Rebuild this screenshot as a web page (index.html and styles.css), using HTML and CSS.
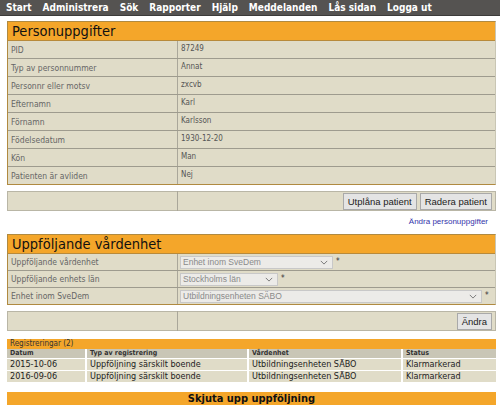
FILE: index.html
```html
<!DOCTYPE html>
<html>
<head>
<meta charset="utf-8">
<link rel="stylesheet" href="styles.css">
</head>
<body>
<nav class="nav">
  <span>Start</span><span>Administrera</span><span>Sök</span><span>Rapporter</span><span>Hjälp</span><span>Meddelanden</span><span>Lås sidan</span><span>Logga ut</span>
</nav>
<main class="page">
  <section class="box">
    <h2 class="box-title">Personuppgifter</h2>
    <table class="form">
      <tr><td class="lbl">PID</td><td class="val">87249</td></tr>
      <tr><td class="lbl">Typ av personnummer</td><td class="val">Annat</td></tr>
      <tr><td class="lbl">Personnr eller motsv</td><td class="val">zxcvb</td></tr>
      <tr><td class="lbl">Efternamn</td><td class="val">Karl</td></tr>
      <tr><td class="lbl">Förnamn</td><td class="val">Karlsson</td></tr>
      <tr><td class="lbl">Födelsedatum</td><td class="val">1930-12-20</td></tr>
      <tr><td class="lbl">Kön</td><td class="val">Man</td></tr>
      <tr><td class="lbl">Patienten är avliden</td><td class="val">Nej</td></tr>
    </table>
  </section>
  <table class="form actions">
    <tr><td class="lbl"></td><td class="val btns"><button class="btn">Utplåna patient</button><button class="btn">Radera patient</button></td></tr>
  </table>
  <div class="linkrow"><a class="link">Ändra personuppgifter</a></div>

  <section class="box second">
    <h2 class="box-title">Uppföljande vårdenhet</h2>
    <table class="form selects">
      <tr><td class="lbl">Uppföljande vårdenhet</td><td class="val"><span class="sel w1">Enhet inom SveDem<svg class="chev" viewBox="0 0 10 6"><path d="M1 1l4 4 4-4" fill="none" stroke="#777" stroke-width="1.2"/></svg></span><span class="req">*</span></td></tr>
      <tr><td class="lbl">Uppföljande enhets län</td><td class="val"><span class="sel w2">Stockholms län<svg class="chev" viewBox="0 0 10 6"><path d="M1 1l4 4 4-4" fill="none" stroke="#777" stroke-width="1.2"/></svg></span><span class="req">*</span></td></tr>
      <tr><td class="lbl">Enhet inom SveDem</td><td class="val"><span class="sel w3">Utbildningsenheten SÄBO<svg class="chev" viewBox="0 0 10 6"><path d="M1 1l4 4 4-4" fill="none" stroke="#777" stroke-width="1.2"/></svg></span><span class="req">*</span></td></tr>
    </table>
  </section>
  <table class="form actions">
    <tr><td class="lbl"></td><td class="val btns"><button class="btn">Ändra</button></td></tr>
  </table>

  <section class="reg">
    <div class="reg-title">Registreringar (2)</div>
    <table class="regtable">
      <tr><th class="c1">Datum</th><th class="c2">Typ av registrering</th><th class="c3">Vårdenhet</th><th class="c4">Status</th></tr>
      <tr><td>2015-10-06</td><td>Uppföljning särskilt boende</td><td>Utbildningsenheten SÄBO</td><td>Klarmarkerad</td></tr>
      <tr><td>2016-09-06</td><td>Uppföljning särskilt boende</td><td>Utbildningsenheten SÄBO</td><td>Klarmarkerad</td></tr>
    </table>
  </section>
  <div class="postpone">Skjuta upp uppföljning</div>
</main>
</body>
</html>
```
FILE: styles.css
```css
html, body {
  margin: 0;
  padding: 0;
  background: #fff;
}
body {
  font-family: "DejaVu Sans Condensed", "DejaVu Sans", Verdana, sans-serif;
  font-stretch: condensed;
  color: #333;
}
.nav {
  display: flex;
  height: 15px;
  background: #555351;
  border-bottom: 1px solid #3c3b3a;
  align-items: center;
  padding-left: 6px;
  gap: 11px;
}
.nav span {
  color: #fff;
  font-weight: bold;
  font-size: 10px;
}
.page {
  margin: 5px 4px 0 7px;
}
.box {
  border: 1px solid #b08a40;
  border-right: 1px solid #c9c6b4;
}
.box-title {
  margin: 0;
  background: #f4a62a;
  color: #111;
  font-weight: normal;
  font-size: 14.5px;
  height: 18px;
  line-height: 19px;
  padding-left: 4px;
  border-bottom: 1px solid #b88a3a;
}
.form {
  width: 100%;
  border-collapse: collapse;
  background: #e0dcc8;
}
.form td {
  height: 17px;
  padding: 0 0 0 3px;
  font-size: 8.5px;
  line-height: 10px;
  border-bottom: 1px solid #9e9b8e;
  vertical-align: middle;
}
.form tr:last-child td {
  border-bottom: none;
}
.lbl {
  width: 166px;
  color: #666;
  border-right: 1px solid #aaa79a;
}
.form .val {
  color: #555;
  font-size: 8px;
  vertical-align: top;
  padding-top: 3px;
  padding-left: 3px;
  height: 14px;
}
.selects td {
  height: 16px;
}
.selects .val {
  padding-top: 2px;
  height: 14px;
  padding-left: 2px;
}
.actions {
  margin-top: 6px;
  border: 1px solid #b9b6a6;
}
.actions td,
.actions .val {
  height: 18px;
  padding-top: 0;
  border-bottom: none;
  vertical-align: middle;
}
.form .btns {
  text-align: right;
  padding-right: 3px;
  line-height: 1;
}
.btn {
  font-family: "Liberation Sans", Arial, sans-serif;
  font-size: 9.5px;
  background: #e4e4e4;
  border: 1px solid #a9a9a9;
  color: #222;
  height: 17px;
  padding: 0 4px;
  margin-left: 3px;
  vertical-align: middle;
}
.linkrow {
  text-align: right;
  padding: 2px 8px 0 0;
  height: 13px;
  line-height: 12px;
}
.link {
  font-family: "Liberation Sans", Arial, sans-serif;
  font-size: 8px;
  color: #3333aa;
}
.second {
  margin-top: 8px;
}
.sel {
  display: inline-flex;
  align-items: center;
  justify-content: space-between;
  height: 11px;
  border: 1px solid #c8c8c8;
  background: #ecebe8;
  color: #8a8a8a;
  font-family: "Liberation Sans", Arial, sans-serif;
  font-size: 8.5px;
  line-height: 11px;
  padding: 0 4px 0 2px;
  vertical-align: top;
}
.w1 { width: 145px; }
.w2 { width: 90px; }
.w3 { width: 294px; }
.chev {
  width: 8px;
  height: 5px;
}
.req {
  display: inline-block;
  margin-left: 3px;
  color: #333;
  font-size: 8px;
  line-height: 11px;
  vertical-align: top;
}
.reg {
  margin-top: 8px;
}
.reg-title {
  background: #f4a62a;
  font-size: 8px;
  color: #333;
  height: 10px;
  line-height: 10px;
  padding-left: 3px;
}
.regtable {
  width: 100%;
  border-collapse: collapse;
}
.regtable th {
  background: #c9c6b6;
  font-size: 7px;
  font-weight: bold;
  text-align: left;
  color: #333;
  height: 9px;
  line-height: 9px;
  padding: 0 0 0 3px;
  border-right: 2px solid #fff;
}
.regtable td {
  background: #e0dcc8;
  font-size: 9px;
  line-height: 11px;
  color: #222;
  height: 11px;
  padding: 0 0 0 3px;
  border-right: 2px solid #fff;
  border-top: 1px solid #fff;
}
.regtable tr > :last-child { border-right: none; }
.c1 { width: 75px; }
.c2 { width: 157px; }
.c3 { width: 149px; }
.postpone {
  margin-top: 10px;
  background: #f4a62a;
  text-align: center;
  font-weight: bold;
  font-size: 11px;
  color: #111;
  height: 13px;
  line-height: 13px;
}
```
